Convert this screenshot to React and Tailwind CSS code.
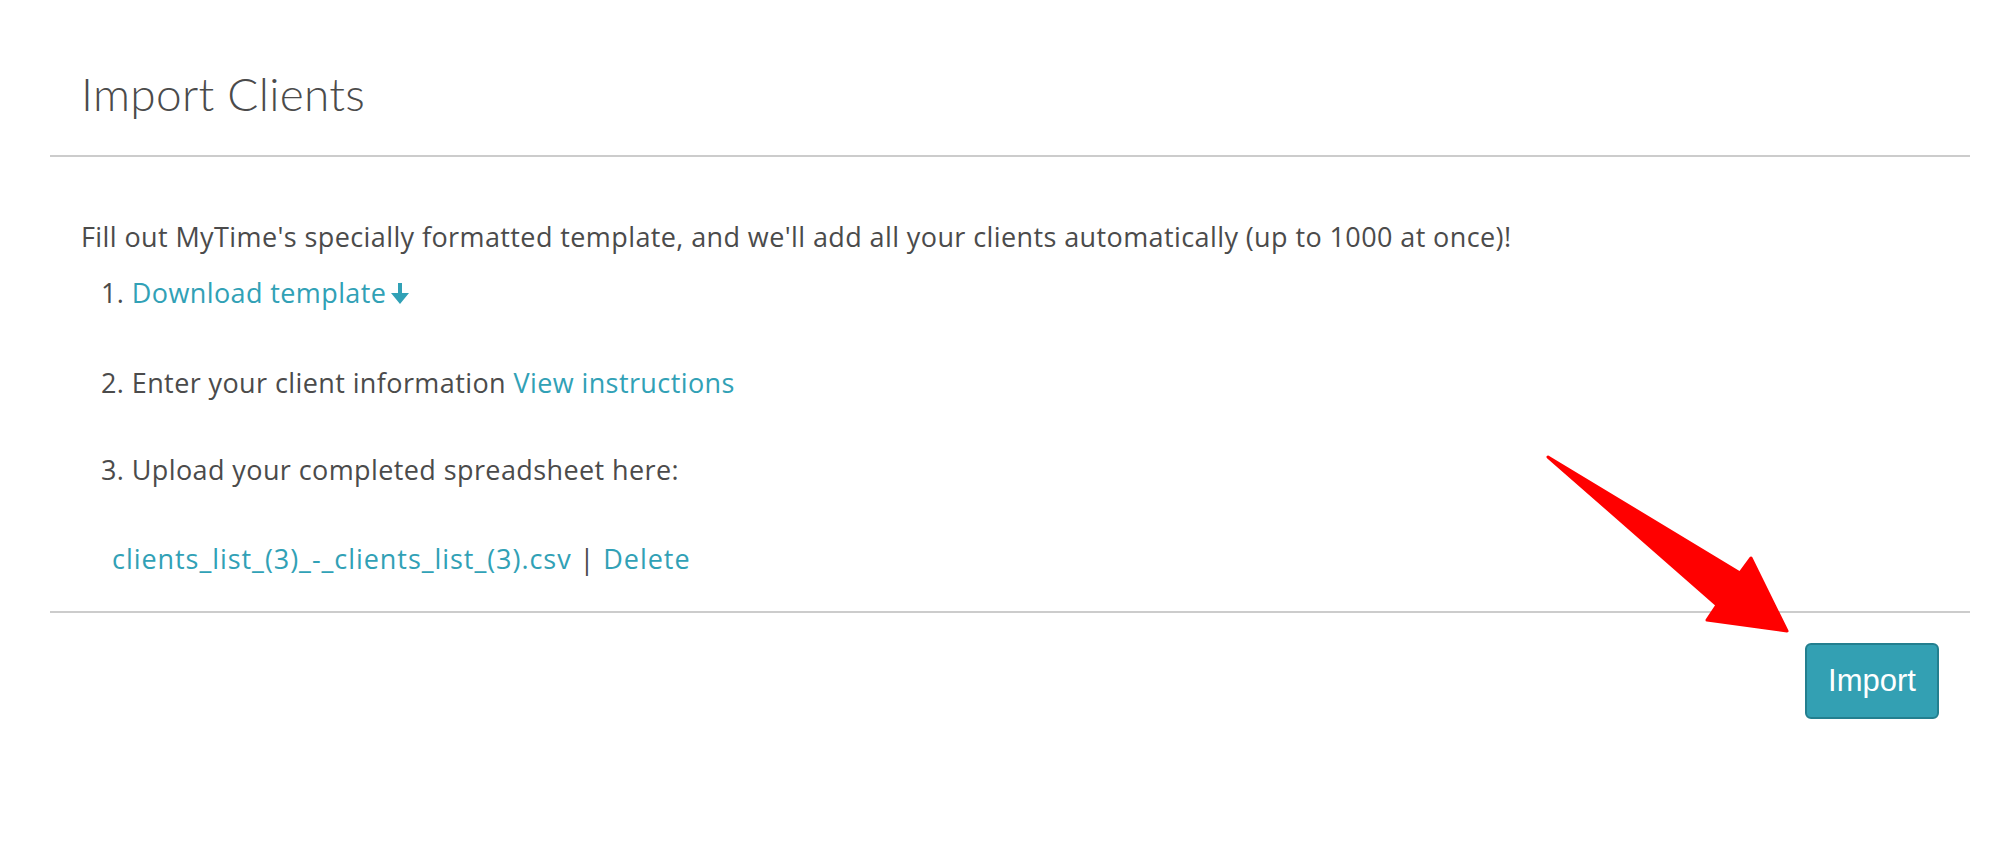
import React from "react";

export default function App() {
  return (
    <div className="relative w-[2010px] h-[866px] bg-white text-[#4b4b4b] font-['Lato',sans-serif]">
      <div className="pl-[50px] pr-[40px]">
        <div className="pt-[71px] pb-[38px] px-[31px] border-b-2 border-[#cccccc]">
          <h1 className="h-[46px] text-[46px] leading-[46px] font-light tracking-[0.3px] text-[#4b4b4b]">Import Clients</h1>
        </div>
        <div className="px-[31px] pt-[60px] pb-[32px] border-b-2 border-[#cccccc] text-[27px] tracking-[0.4px] font-['Open_Sans',sans-serif]">
          <div className="h-[40px] leading-[40px] whitespace-nowrap">
            Fill out MyTime's specially formatted template, and we'll add all your clients automatically (up to 1000 at once)!
          </div>
          <div className="mt-[16px] h-[40px] leading-[40px] pl-[20px] flex items-center">
            <span>1.&nbsp;</span>
            <span className="text-[#31a1b6]">Download template</span>
            <svg className="ml-[5px]" width="18" height="21" viewBox="0 0 18 21">
              <path d="M7 0 H11 V10 H18 L9 21 L0 10 H7 Z" fill="#31a1b6" />
            </svg>
          </div>
          <div className="mt-[50px] h-[40px] leading-[40px] pl-[20px]">
            2. Enter your client information <span className="text-[#31a1b6]">View instructions</span>
          </div>
          <div className="mt-[47px] h-[40px] leading-[40px] pl-[20px]">
            3. Upload your completed spreadsheet here:
          </div>
          <div className="mt-[49px] h-[40px] leading-[40px] pl-[31px] tracking-[0.95px]">
            <span className="text-[#31a1b6]">clients_list_(3)_-_clients_list_(3).csv</span> | <span className="text-[#31a1b6]">Delete</span>
          </div>
        </div>
        <div className="flex justify-end pt-[30px] pr-[31px]">
          <button className="w-[134px] h-[76px] rounded-[6px] bg-[#33a0b3] border-2 border-[#237f8f] text-white text-[31px] font-['Liberation_Sans',Arial,sans-serif]">
            Import
          </button>
        </div>
      </div>
      <svg className="absolute left-0 top-0 pointer-events-none" width="2010" height="866" viewBox="0 0 2010 866">
        <path
          d="M1548 457 L1740 573 L1751 558 L1787 631 L1707 620 L1717 605 Z"
          fill="#ff0000"
          stroke="#ff0000"
          strokeWidth="3"
          strokeLinejoin="round"
        />
      </svg>
    </div>
  );
}
